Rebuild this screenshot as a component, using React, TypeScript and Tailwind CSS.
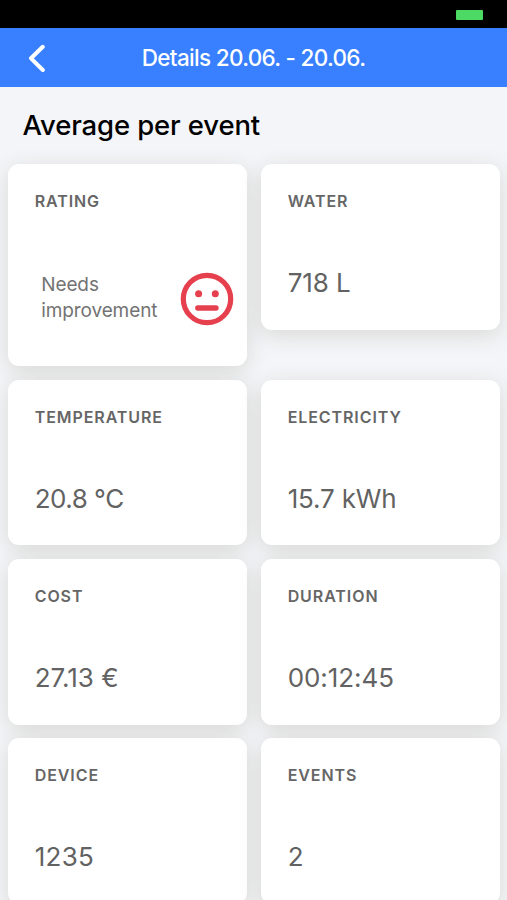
interface Stat {
  label: string;
  value: string;
  valueClass?: string;
}

const stats: Stat[] = [
  { label: "Temperature", value: "20.8 °C", valueClass: "tracking-[-0.5px]" },
  { label: "Electricity", value: "15.7 kWh", valueClass: "tracking-[-0.15px]" },
  { label: "Cost", value: "27.13 €", valueClass: "tracking-[0px]" },
  { label: "Duration", value: "00:12:45", valueClass: "tracking-[-0.05px]" },
  { label: "Device", value: "1235", valueClass: "tracking-[0.3px]" },
  { label: "Events", value: "2" },
];

const cardClass =
  "relative rounded-[11px] bg-white px-[27px] pt-[27px] shadow-[0_5px_22px_rgba(55,50,15,0.14)]";

function NeutralFace() {
  return (
    <svg viewBox="0 0 54 54" className="h-[54px] w-[54px] shrink-0" fill="#e63f4e">
      <circle cx="27" cy="27" r="23.7" fill="none" stroke="#e63f4e" strokeWidth="5.2" />
      <circle cx="18.6" cy="21.7" r="3.5" />
      <circle cx="35.3" cy="21.7" r="3.5" />
      <rect x="15.1" y="33.3" width="23.6" height="5.4" rx="2.7" />
    </svg>
  );
}

function CardLabel({ children }: { children: string }) {
  return (
    <h3 className="text-[16px] leading-[20px] font-semibold tracking-[0.92px] text-[#666666] uppercase">
      {children}
    </h3>
  );
}

function StatCard({ label, value, valueClass = "tracking-[-0.1px]" }: Stat) {
  return (
    <div className={`${cardClass} h-[165.7px]`}>
      <CardLabel>{label}</CardLabel>
      <p className={`mt-[56.1px] text-[26px] leading-[32px] text-[#626262] ${valueClass}`}>{value}</p>
    </div>
  );
}

export default function App() {
  return (
    <div className="h-[900px] overflow-hidden bg-[#f4f5f8] font-['Inter','Liberation_Sans',sans-serif]">
      {/* Status bar */}
      <div className="flex h-[28px] items-start justify-end bg-black pt-[10px] pr-[24px]">
        <span className="h-[10px] w-[27px] rounded-[1px] bg-[#4cd964]" />
      </div>

      {/* Toolbar */}
      <header className="grid h-[59px] grid-cols-[60px_1fr_60px] items-center bg-[#3880ff] text-white">
        <button aria-label="Back" className="pl-[28px]">
          <svg viewBox="0 0 18 28" className="h-[28px] w-[18px]" fill="none" stroke="currentColor" strokeWidth="4" strokeLinecap="round" strokeLinejoin="round">
            <path d="M14.8 2.8 3 14.3 14.8 26" />
          </svg>
        </button>
        <h1 className="text-center text-[22.5px] font-medium tracking-[-0.68px] whitespace-nowrap">
          Details 20.06. - 20.06.
        </h1>
      </header>

      <h2 className="pt-[20px] pl-[22.5px] text-[27.5px] leading-[36px] font-medium tracking-[-0.13px] text-black">
        Average per event
      </h2>

      <main className="mt-[21.3px] grid grid-cols-2 items-start gap-[13.6px] pr-[7px] pl-[7.7px]">
        <div className={`${cardClass} h-[201.7px]`}>
          <CardLabel>Rating</CardLabel>
          <div className="mt-[61px] -mr-[14px] flex items-center justify-between pl-[6.5px]">
            <p className="-mt-[3px] text-[19px] leading-[25.6px] tracking-[-0.1px] text-[#737373]">
              Needs
              <br />
              improvement
            </p>
            <NeutralFace />
          </div>
        </div>
        <StatCard label="Water" value="718 L" />
        {stats.map((stat) => (
          <StatCard key={stat.label} {...stat} />
        ))}
      </main>
    </div>
  );
}
